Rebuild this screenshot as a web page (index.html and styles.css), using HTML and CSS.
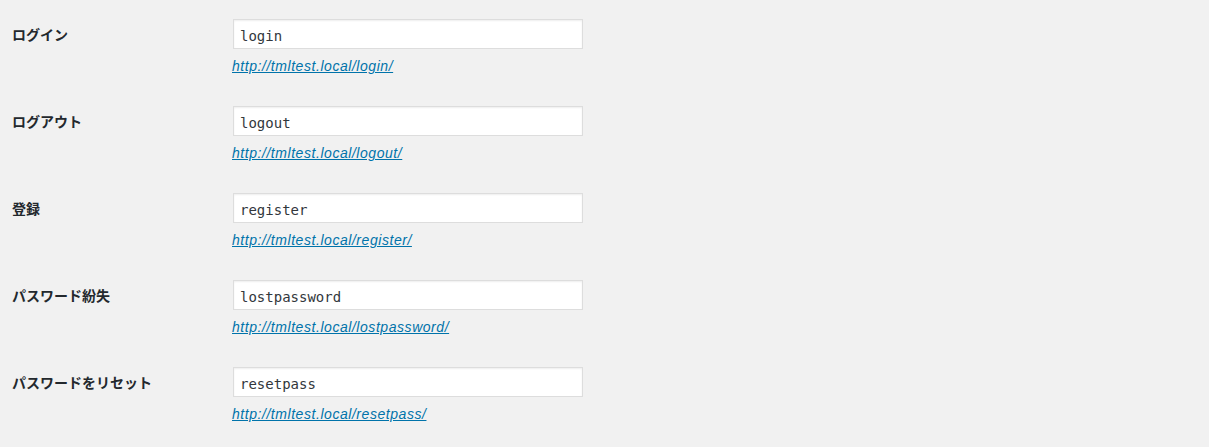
FILE: index.html
```html
<!DOCTYPE html>
<html lang="ja">
<head>
<meta charset="utf-8">
<title>Settings</title>
<link rel="stylesheet" href="styles.css">
</head>
<body>
<div class="form-table">
  <div class="row">
    <div class="label">ログイン</div>
    <div class="field">
      <input class="code-input" type="text" value="login">
      <p class="description"><a href="#">http://tmltest.local/login/</a></p>
    </div>
  </div>
  <div class="row">
    <div class="label">ログアウト</div>
    <div class="field">
      <input class="code-input" type="text" value="logout">
      <p class="description"><a href="#">http://tmltest.local/logout/</a></p>
    </div>
  </div>
  <div class="row">
    <div class="label">登録</div>
    <div class="field">
      <input class="code-input" type="text" value="register">
      <p class="description"><a href="#">http://tmltest.local/register/</a></p>
    </div>
  </div>
  <div class="row">
    <div class="label">パスワード紛失</div>
    <div class="field">
      <input class="code-input" type="text" value="lostpassword">
      <p class="description"><a href="#">http://tmltest.local/lostpassword/</a></p>
    </div>
  </div>
  <div class="row">
    <div class="label">パスワードをリセット</div>
    <div class="field">
      <input class="code-input" type="text" value="resetpass">
      <p class="description"><a href="#">http://tmltest.local/resetpass/</a></p>
    </div>
  </div>
</div>
</body>
</html>
```
FILE: styles.css
```css
html, body {
  margin: 0;
  padding: 0;
  background: #f1f1f1;
}
body {
  font-family: "Liberation Sans", "Noto Sans CJK JP", sans-serif;
  color: #23282d;
  font-size: 13px;
}
.form-table {
  padding: 4px 0 0 12px;
  display: flex;
  flex-direction: column;
}
.row {
  display: flex;
  align-items: flex-start;
}
.label {
  width: 221px;
  flex: none;
  padding: 20px 0 0 0;
  line-height: 20px;
  font-size: 14px;
  font-weight: 700;
  font-family: "Noto Sans CJK JP", sans-serif;
  color: #23282d;
}
.field {
  padding: 15px 10px 15px 0;
}
.code-input {
  display: block;
  box-sizing: border-box;
  width: 350px;
  height: 30px;
  margin: 0;
  padding: 5px 6px 1px;
  border: 1px solid #ddd;
  background: #fff;
  box-shadow: inset 0 1px 2px rgba(0,0,0,0.07);
  font-family: "DejaVu Sans Mono", monospace;
  font-size: 14px;
  color: #32373c;
  outline: none;
}
.description {
  margin: 7px 0 0 -1px;
  line-height: 20px;
  font-size: 14px;
  letter-spacing: 0.55px;
  font-style: italic;
}
.description a {
  color: #0073aa;
  text-decoration: underline;
}
```
